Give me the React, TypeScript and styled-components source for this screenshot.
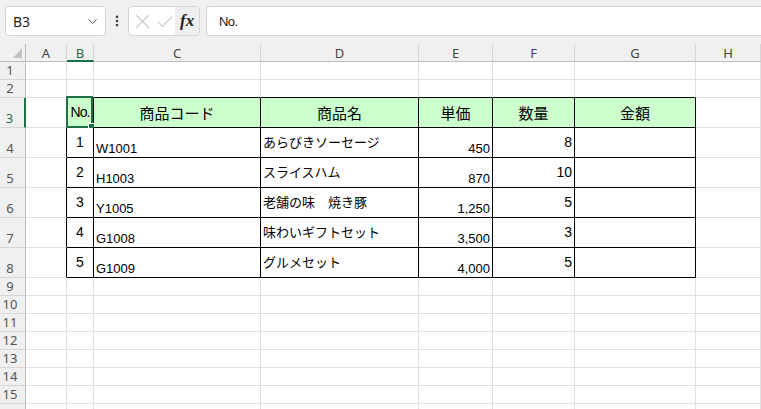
import React from "react";
import styled, { createGlobalStyle } from "styled-components";
import { ChevronDown, EllipsisVertical } from "lucide-react";

const GREEN = "#1e7145";
const GRID = "#e1e1e1";
const HEAD_BG = "#f0f0f0";

const GlobalStyle = createGlobalStyle`
  html, body {
    margin: 0;
    padding: 0;
    background: #fff;
    overflow: hidden;
  }
  body {
    font-family: "Noto Sans", "Noto Sans CJK JP", sans-serif;
  }
  * {
    box-sizing: border-box;
  }
`;

const COL_WIDTHS = ["26px", "41px", "27px", "167px", "158px", "74px", "82px", "121px", "1fr"];
const LETTERS = ["A", "B", "C", "D", "E", "F", "G", "H"];
const ROW_HEIGHTS = [18, 18, 30, 30, 30, 30, 30, 30, 18, 18, 18, 18, 18, 18, 18, 18];

const HEADERS = ["No.", "商品コード", "商品名", "単価", "数量", "金額"];

const ITEMS = [
  { no: "1", code: "W1001", name: "あらびきソーセージ", price: "450", qty: "8" },
  { no: "2", code: "H1003", name: "スライスハム", price: "870", qty: "10" },
  { no: "3", code: "Y1005", name: "老舗の味　焼き豚", price: "1,250", qty: "5" },
  { no: "4", code: "G1008", name: "味わいギフトセット", price: "3,500", qty: "3" },
  { no: "5", code: "G1009", name: "グルメセット", price: "4,000", qty: "5" },
];

const Page = styled.div`
  width: 761px;
  height: 409px;
  overflow: hidden;
  background: #fff;
`;

/* ---------- formula toolbar ---------- */

const Toolbar = styled.div`
  display: flex;
  align-items: flex-start;
  height: 44px;
  padding: 6px 0 0 5px;
  background: ${HEAD_BG};
`;

const Box = styled.div`
  height: 30px;
  background: #fff;
  border: 1px solid #d4d4d4;
  border-radius: 4px;
  display: flex;
  align-items: center;
`;

const NameBox = styled(Box)`
  width: 101px;
  justify-content: space-between;
  padding: 0 5px 0 7px;
  font-family: "Noto Sans", sans-serif;
  font-size: 14px;
  color: #242424;
`;

const Dots = styled.div`
  width: 22px;
  height: 30px;
  display: flex;
  align-items: center;
  justify-content: center;
  color: #424242;
`;

const FxGroup = styled(Box)`
  width: 72px;
  padding: 0 0 0 3px;
  overflow: hidden;
`;

const IconSlot = styled.div`
  width: 22px;
  height: 100%;
  display: flex;
  align-items: center;
  justify-content: center;
  color: #c8c8c8;
`;

const FxSlot = styled.div`
  margin-left: auto;
  width: 24px;
  height: 100%;
  display: flex;
  align-items: center;
  justify-content: center;
  background: #efefef;
  color: #242424;
  font-family: "Liberation Serif", serif;
  font-style: italic;
  font-weight: 700;
  font-size: 17px;
  border-radius: 0 3px 3px 0;
`;

const FormulaBar = styled(Box)`
  flex: 1;
  margin-left: 6px;
  border-right: none;
  border-radius: 4px 0 0 4px;
  padding-left: 12px;
  font-family: "Liberation Sans", sans-serif;
  font-size: 13px;
  color: #1a1a1a;
  letter-spacing: -0.6px;
`;

/* ---------- sheet grid ---------- */

const Sheet = styled.div`
  display: grid;
  grid-template-columns: ${COL_WIDTHS.join(" ")};
  grid-template-rows: 18px ${ROW_HEIGHTS.map((h) => `${h}px`).join(" ")};
`;

const Corner = styled.div`
  background: ${HEAD_BG};
  border-right: 1px solid #bdbdbd;
  border-bottom: 1px solid #bdbdbd;
  display: flex;
  align-items: flex-end;
  justify-content: flex-end;
  padding: 0 3px 3px 0;
`;

const ColHead = styled.div<{ $active?: boolean }>`
  background: ${HEAD_BG};
  border-right: 1px solid #d6d6d6;
  border-bottom: ${(p) => (p.$active ? `2px solid ${GREEN}` : "1px solid #bdbdbd")};
  display: flex;
  align-items: center;
  justify-content: center;
  font-family: "Noto Sans", sans-serif;
  font-size: 13px;
  color: ${(p) => (p.$active ? GREEN : "#444")};
  padding-top: ${(p) => (p.$active ? "1px" : "0")};
  &:last-child {
    border-right: none;
  }
`;

const RowHead = styled.div<{ $active?: boolean }>`
  background: ${HEAD_BG};
  border-right: ${(p) => (p.$active ? `2px solid ${GREEN}` : "1px solid #bdbdbd")};
  border-bottom: 1px solid #d6d6d6;
  display: flex;
  align-items: flex-end;
  justify-content: center;
  padding: 0 5px 0 0;
  font-family: "Noto Sans", sans-serif;
  font-size: 13px;
  line-height: 17px;
  color: ${(p) => (p.$active ? GREEN : "#555")};
`;

type Align = "start" | "center" | "end";

const Cell = styled.div<{
  $right: string;
  $bottom: string;
  $bg?: string;
  $h?: Align;
  $v?: Align;
  $size?: number;
  $tight?: boolean;
}>`
  position: relative;
  background: ${(p) => p.$bg || "#fff"};
  border-right: 1px solid ${(p) => p.$right};
  border-bottom: 1px solid ${(p) => p.$bottom};
  display: flex;
  justify-content: ${(p) => (p.$h === "end" ? "flex-end" : p.$h === "center" ? "center" : "flex-start")};
  align-items: ${(p) => (p.$v === "end" ? "flex-end" : p.$v === "start" ? "flex-start" : "center")};
  padding: 0 2px;
  font-family: "Liberation Sans", "Noto Sans CJK JP", sans-serif;
  font-size: ${(p) => p.$size || 13}px;
  letter-spacing: ${(p) => (p.$tight ? "-1px" : "normal")};
  line-height: 1.15;
  color: #000;
  white-space: nowrap;
`;

const Jp = styled.span`
  font-family: "Noto Sans CJK JP", sans-serif;
  font-weight: 400;
`;

const Selection = styled.div`
  position: absolute;
  left: -1px;
  top: -2px;
  right: 0;
  bottom: -1px;
  border: 2px solid ${GREEN};
  pointer-events: none;
`;

const FillHandle = styled.div`
  position: absolute;
  right: -5px;
  bottom: -5px;
  width: 6px;
  height: 6px;
  background: ${GREEN};
  border: 1px solid #fff;
  box-sizing: content-box;
`;

type CellSpec = {
  text?: string;
  h?: Align;
  v?: Align;
  size?: number;
  jp?: boolean;
  tight?: boolean;
};

function cellContent(row: number, col: number): CellSpec {
  // col: 0 = A ... 7 = H
  if (row === 3 && col === 1) {
    return { text: HEADERS[0], h: "center", v: "center", size: 14, tight: true };
  }
  if (row === 3 && col >= 2 && col <= 6) {
    return { text: HEADERS[col - 1], h: "center", v: "center", size: 15, jp: true };
  }
  if (row >= 4 && row <= 8) {
    const item = ITEMS[row - 4];
    switch (col) {
      case 1:
        return { text: item.no, h: "center", v: "center", size: 14 };
      case 2:
        return { text: item.code, h: "start", v: "end" };
      case 3:
        return { text: item.name, h: "start", v: "center", size: 13, jp: true };
      case 4:
        return { text: item.price, h: "end", v: "end" };
      case 5:
        return { text: item.qty, h: "end", v: "center", size: 14 };
    }
  }
  return {};
}

const SelectAll = () => (
  <svg width="9" height="10" viewBox="0 0 9 10">
    <polygon points="9,0 9,10 0,10" fill="#c2c2c2" />
  </svg>
);

const CancelIcon = () => (
  <svg width="15" height="15" viewBox="0 0 15 15" fill="none" stroke="currentColor" strokeWidth="1.1">
    <path d="M1 1 L14 14 M14 1 L1 14" />
  </svg>
);

const EnterIcon = () => (
  <svg width="16" height="13" viewBox="0 0 16 13" fill="none" stroke="currentColor" strokeWidth="1.1">
    <path d="M1 7 L5.5 11.5 L15 1.5" />
  </svg>
);

export default function App() {
  const tableRow = (r: number) => r >= 3 && r <= 8;

  return (
    <Page>
      <GlobalStyle />
      <Toolbar>
        <NameBox>
          <span>B3</span>
          <ChevronDown size={15} strokeWidth={1.5} color="#424242" />
        </NameBox>
        <Dots>
          <EllipsisVertical size={14} strokeWidth={2.5} />
        </Dots>
        <FxGroup>
          <IconSlot>
            <CancelIcon />
          </IconSlot>
          <IconSlot>
            <EnterIcon />
          </IconSlot>
          <FxSlot>fx</FxSlot>
        </FxGroup>
        <FormulaBar>No.</FormulaBar>
      </Toolbar>

      <Sheet>
        <Corner>
          <SelectAll />
        </Corner>
        {LETTERS.map((l) => (
          <ColHead key={l} $active={l === "B"}>
            {l}
          </ColHead>
        ))}

        {ROW_HEIGHTS.map((_, i) => {
          const r = i + 1;
          return (
            <React.Fragment key={r}>
              {/* row 16 is cut off by the window, its number isn't visible */}
              <RowHead $active={r === 3}>{r < 16 ? r : ""}</RowHead>
              {LETTERS.map((_, c) => {
                const inTable = tableRow(r) && c >= 1 && c <= 6;
                const right = inTable || (c === 0 && tableRow(r)) ? "#000" : GRID;
                const bottom = inTable || (r === 2 && c >= 1 && c <= 6) ? "#000" : GRID;
                const spec = cellContent(r, c);
                return (
                  <Cell
                    key={c}
                    $right={right}
                    $bottom={bottom}
                    $bg={r === 3 && inTable ? "#ccffcc" : undefined}
                    $h={spec.h}
                    $v={spec.v}
                    $size={spec.size}
                    $tight={spec.tight}
                  >
                    {spec.jp ? <Jp>{spec.text}</Jp> : spec.text}
                    {r === 3 && c === 1 && (
                      <Selection>
                        <FillHandle />
                      </Selection>
                    )}
                  </Cell>
                );
              })}
            </React.Fragment>
          );
        })}
      </Sheet>
    </Page>
  );
}
